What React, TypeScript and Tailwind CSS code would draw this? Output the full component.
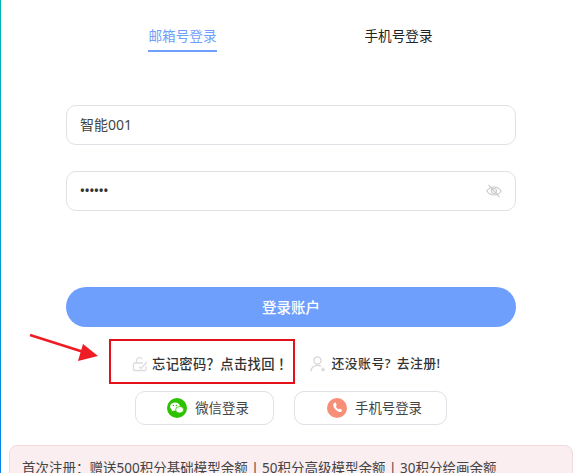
import React from 'react'

const EyeOffIcon = () => (
  <svg width="16" height="14" viewBox="0 0 16 14" fill="none" stroke="#c8c8c8" strokeWidth="1.1">
    <path d="M0.8 7C2.600 4.300 5 3 8 3s5.400 1.300 7.200 4C13.400 9.700 11 11 8 11S2.600 9.700 0.800 7z" />
    <circle cx="8" cy="7" r="2.500" />
    <path d="M2.500 0.800L13.500 13.200" />
  </svg>
)

const LockIcon = () => (
  <svg width="16" height="16" viewBox="0 0 16 16" fill="none" stroke="#dcdcdc" strokeWidth="1.3">
    <path d="M4.500 7V4.500a3 3 0 0 1 5.600-1.400" />
    <path d="M11 7H2.500a1 1 0 0 0-1 1v5.500a1 1 0 0 0 1 1H13a1 1 0 0 0 1-1V10" />
    <path d="M7 11l2 1.500L15 6" />
  </svg>
)

const UserIcon = () => (
  <svg width="16" height="16" viewBox="0 0 16 16" fill="none" stroke="#d6d6d6" strokeWidth="1.3">
    <circle cx="7.500" cy="4.500" r="3.600" />
    <path d="M1 15.500c0-3.800 2.600-6.200 6.500-6.200 1.400 0 2.600.3 3.600 1" />
    <path d="M13 11.500v4M11 13.500h4" />
  </svg>
)

const WechatIcon = () => (
  <svg width="20" height="20" viewBox="0 0 20 20">
    <circle cx="10" cy="10" r="10" fill="#2dc100" />
    <ellipse cx="8" cy="8.600" rx="5" ry="4.200" fill="#fff" />
    <path d="M5.200 11.500l-.6 2 2.200-1.200z" fill="#fff" />
    <ellipse cx="12.600" cy="11.800" rx="4" ry="3.300" fill="#fff" stroke="#2dc100" strokeWidth="0.8" />
    <circle cx="6.400" cy="7.400" r="0.700" fill="#2dc100" />
    <circle cx="9.400" cy="7.400" r="0.700" fill="#2dc100" />
  </svg>
)

const PhoneIcon = () => (
  <svg width="20" height="20" viewBox="0 0 20 20">
    <circle cx="10" cy="10" r="10" fill="#f78e78" />
    <path
      d="M7 5l1.600-.5 1.200 2.700-1 1c.5 1.400 1.400 2.500 2.800 3.200l1-.9 2.500 1.500-.6 1.500c-.4.5-1.200.7-2 .5-3.300-1-5.600-3.500-6.300-6.700-.1-.8.2-1.500.8-2.300z"
      fill="#fff"
    />
  </svg>
)

const Arrow = () => (
  <svg className="absolute left-[28px] top-[333px]" width="72" height="30" viewBox="0 0 72 30">
    <path d="M2 2L54 18.500" stroke="#ee1c25" strokeWidth="2.500" />
    <path d="M70 23L50 28L55 11z" fill="#ee1c25" />
  </svg>
)

export default function App() {
  return (
    <div
      className="relative flex h-[473px] w-[580px] overflow-hidden bg-white text-[#333]"
      style={{ fontFamily: '"Noto Sans", "Noto Sans CJK SC", sans-serif' }}
    >
      <div className="w-[1px] shrink-0 bg-gradient-to-b from-[#00b3b3] to-[#0a84e8]" />
      <div className="flex-1 pl-[8px] pr-[7px]">
        {/* tabs */}
        <div className="flex h-[105px] items-start pl-[139px] pt-[25px] text-[13.6px] leading-[22px]">
          <div className="w-[69px] border-b-2 border-[#6f9ffd] pb-[3px] text-center text-[#6f9ffd]">邮箱号登录</div>
          <div className="ml-[147px] w-[69px] text-center text-[#222]">手机号登录</div>
        </div>

        {/* form */}
        <div className="mx-[57px] flex flex-col">
          <div className="flex h-[40px] items-center rounded-[10px] border border-[#e0e0e6] px-[13px] pb-[2px] text-[14px] text-[#444]">
            智能001
          </div>
          <div className="mt-[26px] flex h-[40px] items-center justify-between rounded-[10px] border border-[#e0e0e6] px-[13px] text-[12.5px] font-semibold text-[#333]">
            <span>••••••</span>
            <EyeOffIcon />
          </div>
          <button className="mt-[76px] h-[40px] rounded-full bg-[#6f9ffd] pt-[1px] text-[14.5px] font-medium text-white">
            登录账户
          </button>
        </div>

        {/* links */}
        <div className="mt-[27px] flex h-[20px] items-center text-[13.3px] font-medium text-[#333] [text-spacing-trim:space-all]">
          <div className="ml-[123px] flex items-center gap-[4px]">
            <LockIcon />
            <span className="tracking-[0.35px]">
              忘记密码？点击找回<span className="font-['Noto_Sans_CJK_TC']">！</span>
            </span>
          </div>
          <div className="ml-[22px] flex items-center gap-[5px]">
            <UserIcon />
            <span className="text-[12.8px] tracking-[0.5px] [word-spacing:2px]">还没账号? 去注册!</span>
          </div>
        </div>

        {/* other login */}
        <div className="ml-[126px] mt-[17px] flex gap-[20px] text-[13.4px] text-[#444]">
          <button className="flex h-[34px] w-[139px] items-center justify-center gap-[8px] rounded-[10px] border border-[#e0e0e6] pl-[7px]">
            <WechatIcon />
            微信登录
          </button>
          <button className="flex h-[34px] w-[153px] items-center justify-center gap-[8px] rounded-[10px] border border-[#e0e0e6] pl-[8px]">
            <PhoneIcon />
            手机号登录
          </button>
        </div>

        {/* notice */}
        <div className="mt-[20px] h-[60px] rounded-[8px] border border-[#f5d9de] bg-[#faeef0] px-[12px] pt-[12px] text-[13.5px] leading-[20px] text-[#444]">
          首次注册：赠送500积分基础模型余额 | 50积分高级模型余额 | 30积分绘画余额
        </div>
      </div>

      {/* annotation */}
      <Arrow />
      <div className="absolute left-[109px] top-[339px] h-[45px] w-[186px] border-2 border-[#e5111a]" />
    </div>
  )
}
